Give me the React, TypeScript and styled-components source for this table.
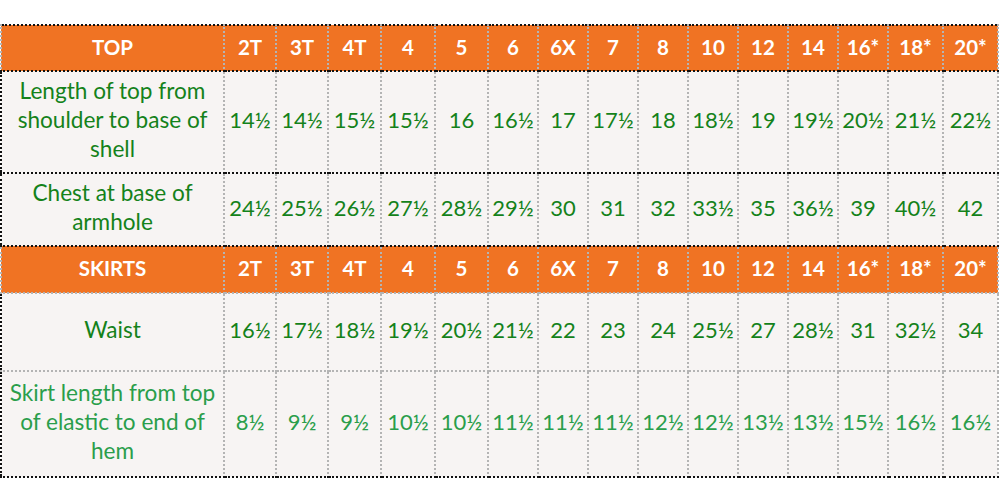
import React from 'react'
import styled, { createGlobalStyle } from 'styled-components'

const GlobalStyle = createGlobalStyle`
  body {
    margin: 0;
    background: #ffffff;
    font-family: Lato, "Open Sans", sans-serif;
  }
`

const orange = '#f07323'
const heavy = '2px dotted #111'
const light = '2px dotted #b4b4b4'

const Page = styled.div`
  padding-top: 24px;
`

const Table = styled.table`
  border-collapse: collapse;
  table-layout: fixed;
  width: 999px;
  border: ${heavy};
`

const Row = styled.tr<{ $h: number; $bottom?: 'heavy' | 'light' }>`
  height: ${p => p.$h}px;

  & > td,
  & > th {
    border-bottom: ${p => (p.$bottom === 'heavy' ? heavy : light)};
  }
`

const HeadCell = styled.th`
  background: ${orange};
  color: #ffffff;
  font-weight: 700;
  font-size: 20.5px;
  text-align: center;
  padding: 0 0 3px;
  border-left: ${light};
  border-right: ${light};
`

const Label = styled.td<{ $tone: 'dark' | 'light' }>`
  background: #f7f4f3;
  color: ${p => (p.$tone === 'dark' ? '#14821a' : '#2a9e4b')};
  font-size: 22.6px;
  line-height: 29px;
  text-align: center;
  padding: 0 2px 5px;
  border-right: ${light};
`

const Value = styled.td<{ $tone: 'dark' | 'light' }>`
  background: #f7f4f3;
  color: ${p => (p.$tone === 'dark' ? '#14821a' : '#2a9e4b')};
  font-size: 22px;
  text-align: center;
  padding: 0 0 5px;
  white-space: nowrap;
  border-left: ${light};
  border-right: ${light};
`

const widths = [223, 52, 52, 53, 54, 53, 50, 50, 50, 50, 50, 50, 50, 50, 55, 55]
const sizes = ['2T', '3T', '4T', '4', '5', '6', '6X', '7', '8', '10', '12', '14', '16*', '18*', '20*']

type Line = { label: string; values: string[]; h: number; bottom: 'heavy' | 'light'; tone: 'dark' | 'light' }

const sections: { title: string; bottom: 'heavy' | 'light'; h: number; rows: Line[] }[] = [
  {
    title: 'TOP',
    bottom: 'heavy',
    h: 46,
    rows: [
      {
        label: 'Length of top from shoulder to base of shell',
        values: ['14½', '14½', '15½', '15½', '16', '16½', '17', '17½', '18', '18½', '19', '19½', '20½', '21½', '22½'],
        h: 102,
        bottom: 'heavy',
        tone: 'dark',
      },
      {
        label: 'Chest at base of armhole',
        values: ['24½', '25½', '26½', '27½', '28½', '29½', '30', '31', '32', '33½', '35', '36½', '39', '40½', '42'],
        h: 73,
        bottom: 'heavy',
        tone: 'dark',
      },
    ],
  },
  {
    title: 'SKIRTS',
    bottom: 'light',
    h: 47,
    rows: [
      {
        label: 'Waist',
        values: ['16½', '17½', '18½', '19½', '20½', '21½', '22', '23', '24', '25½', '27', '28½', '31', '32½', '34'],
        h: 78,
        bottom: 'light',
        tone: 'dark',
      },
      {
        label: 'Skirt length from top of elastic to end of hem',
        values: ['8½', '9½', '9½', '10½', '10½', '11½', '11½', '11½', '12½', '12½', '13½', '13½', '15½', '16½', '16½'],
        h: 106,
        bottom: 'heavy',
        tone: 'light',
      },
    ],
  },
]

export default function App() {
  return (
    <Page>
      <GlobalStyle />
      <Table>
        <colgroup>
          {widths.map((w, i) => (
            <col key={i} style={{ width: w }} />
          ))}
        </colgroup>
        <tbody>
          {sections.map(sec => (
            <React.Fragment key={sec.title}>
              <Row $h={sec.h} $bottom={sec.bottom}>
                <HeadCell>{sec.title}</HeadCell>
                {sizes.map(s => (
                  <HeadCell key={s}>{s}</HeadCell>
                ))}
              </Row>
              {sec.rows.map(r => (
                <Row key={r.label} $h={r.h} $bottom={r.bottom}>
                  <Label $tone={r.tone}>{r.label}</Label>
                  {r.values.map((v, i) => (
                    <Value key={i} $tone={r.tone}>
                      {v}
                    </Value>
                  ))}
                </Row>
              ))}
            </React.Fragment>
          ))}
        </tbody>
      </Table>
    </Page>
  )
}
